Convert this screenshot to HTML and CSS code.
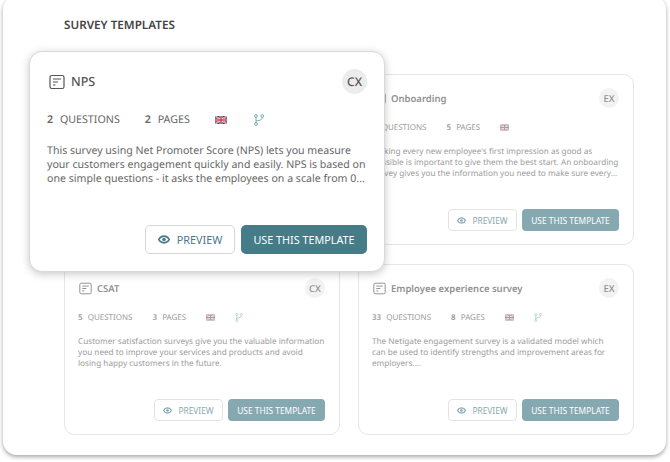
FILE: index.html

```html
<!DOCTYPE html>
<html lang="en">
<head>
  <meta charset="UTF-8">
  <meta name="viewport" content="width=device-width, initial-scale=1.0">
  <title>Survey Templates</title>
  <link rel="stylesheet" href="styles.css">
</head>
<body>
  <svg class="icon-defs" width="0" height="0" aria-hidden="true">
    <symbol id="icon-doc" viewBox="0 0 16 16">
      <rect x="1" y="1.5" width="14" height="13" rx="1.8" fill="none" stroke="currentColor" stroke-width="1.2"/>
      <path d="M4 5h8M4 8h5M4 11h2.5" fill="none" stroke="currentColor" stroke-width="1.2"/>
    </symbol>
    <symbol id="icon-flag" viewBox="0 0 12 8">
      <rect width="12" height="8" rx="1" fill="#3b4a78"/>
      <path d="M0 0l12 8M12 0L0 8" stroke="#eee" stroke-width="1.6"/>
      <path d="M0 0l12 8M12 0L0 8" stroke="#d8404f" stroke-width=".7"/>
      <path d="M6 0v8M0 4h12" stroke="#eee" stroke-width="2.6"/>
      <path d="M6 0v8M0 4h12" stroke="#d8404f" stroke-width="1.5"/>
    </symbol>
    <symbol id="icon-fork" viewBox="0 0 10 12">
      <circle cx="2" cy="2" r="1.4" fill="none" stroke="currentColor" stroke-width=".8"/>
      <circle cx="8.2" cy="2" r="1.4" fill="none" stroke="currentColor" stroke-width=".8"/>
      <circle cx="2" cy="10" r="1.4" fill="none" stroke="currentColor" stroke-width=".8"/>
      <path d="M2 3.4v5.2M8.2 3.4c0 2.6-1.6 3-6.2 3.4" fill="none" stroke="currentColor" stroke-width=".8"/>
    </symbol>
    <symbol id="icon-eye" viewBox="0 0 16 12">
      <path d="M1 6C2.500 3 5 1.500 8 1.500S13.500 3 15 6c-1.500 3-4 4.500-7 4.500S2.500 9 1 6z" fill="none" stroke="currentColor" stroke-width="2.200"/>
      <circle cx="8" cy="6" r="2.400" fill="currentColor"/>
    </symbol>
  </svg>

  <div class="panel">
    <h2 class="panel-title">SURVEY TEMPLATES</h2>

    <div class="card-grid">
      <div class="card card-faded"></div>

      <div class="card card-faded">
        <div class="card-head">
          <svg class="doc-icon"><use href="#icon-doc"/></svg>
          <span class="card-title">Onboarding</span>
          <span class="badge">EX</span>
        </div>
        <div class="stats">
          <span class="stat"><b>3</b> QUESTIONS</span>
          <span class="stat"><b>5</b> PAGES</span>
          <svg class="flag"><use href="#icon-flag"/></svg>
        </div>
        <p class="card-text">Making every new employee's first impression as good as possible is important to give them the best start. An onboarding survey gives you the information you need to make sure every...</p>
        <div class="card-actions">
          <button class="btn-preview"><svg class="eye"><use href="#icon-eye"/></svg>PREVIEW</button>
          <button class="btn-use">USE THIS TEMPLATE</button>
        </div>
      </div>

      <div class="card card-faded">
        <div class="card-head">
          <svg class="doc-icon"><use href="#icon-doc"/></svg>
          <span class="card-title">CSAT</span>
          <span class="badge">CX</span>
        </div>
        <div class="stats">
          <span class="stat"><b>5</b> QUESTIONS</span>
          <span class="stat"><b>3</b> PAGES</span>
          <svg class="flag"><use href="#icon-flag"/></svg>
          <svg class="fork"><use href="#icon-fork"/></svg>
        </div>
        <p class="card-text">Customer satisfaction surveys give you the valuable information you need to improve your services and products and avoid losing happy customers in the future.</p>
        <div class="card-actions">
          <button class="btn-preview"><svg class="eye"><use href="#icon-eye"/></svg>PREVIEW</button>
          <button class="btn-use">USE THIS TEMPLATE</button>
        </div>
      </div>

      <div class="card card-faded">
        <div class="card-head">
          <svg class="doc-icon"><use href="#icon-doc"/></svg>
          <span class="card-title">Employee experience survey</span>
          <span class="badge">EX</span>
        </div>
        <div class="stats">
          <span class="stat"><b>33</b> QUESTIONS</span>
          <span class="stat"><b>8</b> PAGES</span>
          <svg class="flag"><use href="#icon-flag"/></svg>
          <svg class="fork"><use href="#icon-fork"/></svg>
        </div>
        <p class="card-text">The Netigate engagement survey is a validated model which can be used to identify strengths and improvement areas for employers....</p>
        <div class="card-actions">
          <button class="btn-preview"><svg class="eye"><use href="#icon-eye"/></svg>PREVIEW</button>
          <button class="btn-use">USE THIS TEMPLATE</button>
        </div>
      </div>
    </div>

    <div class="card card-big">
      <div class="card-head">
        <svg class="doc-icon"><use href="#icon-doc"/></svg>
        <span class="card-title">NPS</span>
        <span class="badge">CX</span>
      </div>
      <div class="stats">
        <span class="stat"><b>2</b> QUESTIONS</span>
        <span class="stat"><b>2</b> PAGES</span>
        <svg class="flag"><use href="#icon-flag"/></svg>
        <svg class="fork"><use href="#icon-fork"/></svg>
      </div>
      <p class="card-text">This survey using Net Promoter Score (NPS) lets you measure your customers engagement quickly and easily. NPS is based on one simple questions - it asks the employees on a scale from 0...</p>
      <div class="card-actions">
        <button class="btn-preview"><svg class="eye"><use href="#icon-eye"/></svg>PREVIEW</button>
        <button class="btn-use">USE THIS TEMPLATE</button>
      </div>
    </div>
  </div>
</body>
</html>
```

FILE: styles.css

```css
body, html {
  margin: 0;
  padding: 0;
  height: 100%;
  background-color: white;
  font-family: "Noto Sans", "Open Sans", sans-serif;
  text-rendering: geometricPrecision;
  overflow: hidden;
}

.icon-defs {
  position: absolute;
}

.panel {
  position: relative;
  box-sizing: border-box;
  width: 663px;
  height: 459px;
  margin: -4px 0 0 3px;
  padding: 21px 32px 0 61px;
  background-color: white;
  border-radius: 14px;
  box-shadow: 0 2px 4px rgba(0,0,0,0.35);
}

.panel-title {
  margin: 0 0 41px;
  font-size: 11.700px;
  line-height: 16px;
  font-weight: 600;
  color: #444;
}

.card-grid {
  display: grid;
  grid-template-columns: 276px 276px;
  grid-auto-rows: 171px;
  gap: 19px 18px;
}

.card {
  display: flex;
  flex-direction: column;
  box-sizing: border-box;
  padding: 13px 14px;
  background-color: white;
  border: 1px solid #d9d9d9;
  border-radius: 10px;
}

.card-faded {
  border-color: #e6e6e6;
}

.card-faded > * {
  opacity: 0.65;
}

.card-head {
  display: flex;
  align-items: center;
  height: 20px;
  color: #555;
}

.doc-icon {
  flex: none;
  width: 13px;
  height: 13px;
  margin-right: 5px;
  color: #555;
}

.card-title {
  flex: 1;
  font-size: 9.500px;
  font-weight: 600;
}

.badge {
  flex: none;
  display: flex;
  align-items: center;
  justify-content: center;
  width: 20px;
  height: 20px;
  border-radius: 50%;
  background-color: #ececec;
  font-size: 9.500px;
  font-weight: 500;
  color: #555;
}

.stats {
  display: flex;
  align-items: center;
  gap: 20px;
  height: 12px;
  margin: 13px 0 0 -1px;
  font-size: 8px;
  color: #666;
}

.stat b {
  margin-right: 3px;
  font-weight: 600;
}

.flag {
  width: 9px;
  height: 7px;
}

.fork {
  width: 8px;
  height: 9px;
  color: #5d98a8;
}

.card-text {
  margin: 13px 0 0 -1px;
  flex: 1;
  font-size: 8.200px;
  line-height: 11px;
  color: #666;
}

.card-actions {
  display: flex;
  justify-content: flex-end;
  gap: 5px;
}

.btn-preview, .btn-use {
  display: flex;
  align-items: center;
  justify-content: center;
  box-sizing: border-box;
  height: 22px;
  padding: 0;
  border-radius: 4px;
  font-family: inherit;
  font-size: 8.400px;
}

.btn-preview {
  width: 69px;
  background-color: white;
  border: 1px solid #d5d5d5;
  color: #46798a;
}

.btn-use {
  width: 97px;
  background-color: #467b88;
  border: none;
  color: white;
}

.eye {
  width: 9px;
  height: 7px;
  margin-right: 6px;
}

/* the hovered card sits on top of the grid, about 1.29x bigger */
.card-big {
  position: absolute;
  left: 26px;
  top: 55px;
  width: 356px;
  height: 221px;
  padding: 17px;
  border-radius: 13px;
  box-shadow: 0 2px 8px rgba(0,0,0,0.22);
}

.card-big .card-head {
  height: 25px;
}

.card-big .doc-icon {
  width: 16px;
  height: 16px;
  margin: 0 6px 0 2px;
}

.card-big .card-title {
  font-size: 12.500px;
  font-weight: 500;
}

.card-big .badge {
  width: 25px;
  height: 25px;
  font-size: 12px;
}

.card-big .stats {
  gap: 25px;
  height: 14px;
  margin: 19px 0 0;
  font-size: 10.700px;
}

.card-big .stat b {
  margin-right: 4px;
}

.card-big .flag {
  width: 12px;
  height: 8px;
}

.card-big .fork {
  width: 10px;
  height: 12px;
  margin-left: 2px;
}

.card-big .card-text {
  margin: 17px -2px 0 0;
  font-size: 10.600px;
  line-height: 14px;
}

.card-big .card-actions {
  gap: 6px;
}

.card-big .btn-preview, .card-big .btn-use {
  height: 29px;
  border-radius: 5px;
  font-size: 10.800px;
}

.card-big .btn-preview {
  width: 90px;
}

.card-big .btn-use {
  width: 126px;
}

.card-big .eye {
  width: 12px;
  height: 9px;
  margin-right: 7px;
}
```
